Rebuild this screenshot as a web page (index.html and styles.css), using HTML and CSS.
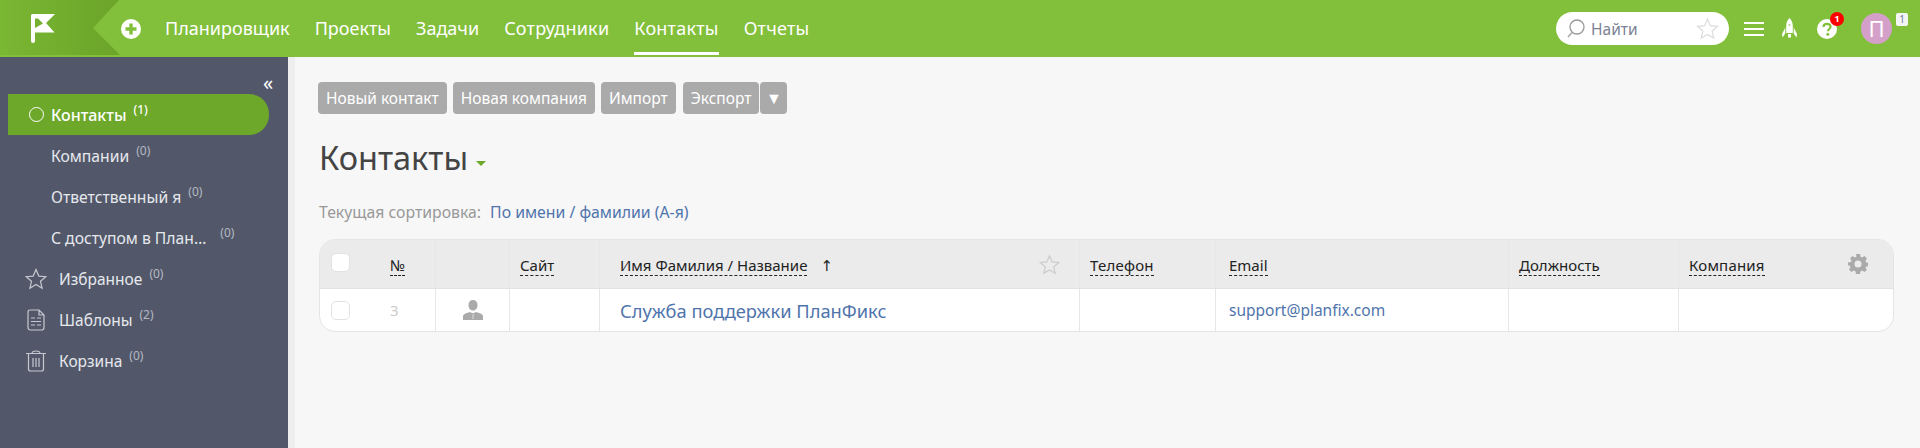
FILE: index.html
```html
<!DOCTYPE html>
<html lang="ru">
<head>
<meta charset="utf-8">
<title>Контакты</title>
<link rel="stylesheet" href="styles.css">
</head>
<body>
<header class="topbar">
  <a class="logo">
    <svg class="logo-bg" width="120" height="57" viewBox="0 0 120 57"><defs><linearGradient id="lg" x1="0" y1="0" x2="1" y2="0"><stop offset="0" stop-color="#7ab733"/><stop offset="1" stop-color="#6ba429"/></linearGradient></defs><path d="M0 0H119L93 28L120 55H0Z" fill="url(#lg)"/></svg>
    <svg class="logo-flag" width="24" height="29" viewBox="0 0 24 29"><path d="M0 1.500Q0 0 1.500 0H24L15 9L23.500 18.500H4V27Q4 29 2 29Q0 29 0 27Z M4 4.500V14L12 9.500L7 4.500Z" fill="#fff" fill-rule="evenodd"/></svg>
  </a>
  <svg class="plus" width="20" height="20" viewBox="0 0 20 20"><path fill-rule="evenodd" fill="#fff" d="M10 0a10 10 0 1 0 0 20a10 10 0 0 0 0-20Z M8.300 4.500h3.400v3.800h3.800v3.400h-3.800v3.800h-3.400v-3.800h-3.800v-3.400h3.800Z"/></svg>
  <nav class="nav">
    <a class="nav-item">Планировщик</a>
    <a class="nav-item">Проекты</a>
    <a class="nav-item">Задачи</a>
    <a class="nav-item nav-wide">Сотрудники</a>
    <a class="nav-item nav-wide is-active">Контакты</a>
    <a class="nav-item nav-wide">Отчеты</a>
  </nav>
  <div class="tools">
    <div class="search">
      <svg width="18" height="20" viewBox="0 0 18 20"><circle cx="10" cy="8" r="7" fill="none" stroke="#999" stroke-width="1.300"/><path d="M5 13.500L1 18" stroke="#aaa" stroke-width="1.600" fill="none"/></svg>
      <span class="search-text">Найти</span>
      <svg class="search-star" width="23" height="23" viewBox="0 0 24 24"><path d="M12 2l3 7 7.500.7-5.700 5 1.700 7.300L12 18.200 5.500 22l1.700-7.300-5.700-5L9 9z" fill="none" stroke="#ddd" stroke-width="1.300"/></svg>
    </div>
    <svg class="burger" width="20" height="14" viewBox="0 0 20 14"><path d="M0 1H20M0 7H20M0 13H20" stroke="#fff" stroke-width="2"/></svg>
    <svg class="rocket" width="15" height="20" viewBox="0 0 15 20"><path fill="#fff" d="M7.500 0C9.800 2 10.800 5 10.800 8V15H4.200V8C4.200 5 5.200 2 7.500 0Z M3.300 9.500V15.500L.5 19.500L0 16Z M11.700 9.500V15.500L14.500 19.500L15 16Z M6 16H9V19.500H6Z"/><circle cx="7.500" cy="7" r="1" fill="#a8d47a"/></svg>
    <span class="help">
      <svg width="20" height="20" viewBox="0 0 20 20"><circle cx="10" cy="10" r="10" fill="#fff"/><path d="M6.500 8C6.500 5.800 8 4.800 10 4.800S13.500 6 13.500 7.800C13.500 10 11 10 11 12.300" fill="none" stroke="#82c03c" stroke-width="2.200"/><circle cx="10.800" cy="15.300" r="1.500" fill="#82c03c"/></svg>
      <b class="help-badge">1</b>
    </span>
    <span class="avatar">П<b class="avatar-badge">1</b></span>
  </div>
</header>
<div class="layout">
  <aside class="sidebar">
    <div class="collapse">«</div>
    <a class="side-item is-current"><span class="ring"></span><span class="side-label">Контакты</span><sup class="count">(1)</sup></a>
    <a class="side-item is-sub"><span class="side-label">Компании</span><sup class="count">(0)</sup></a>
    <a class="side-item is-sub"><span class="side-label">Ответственный я</span><sup class="count">(0)</sup></a>
    <a class="side-item is-sub"><span class="side-label">С доступом в План…</span><sup class="count wide">(0)</sup></a>
    <a class="side-item has-icon">
      <svg width="22" height="22" viewBox="0 0 22 22"><path d="M11 1.500l2.800 6.600 7 .6-5.300 4.600 1.600 7L11 16.500l-6.100 3.800 1.600-7L1.200 8.700l7-.6z" fill="none" stroke="#c5c8d0" stroke-width="1.200"/></svg>
      <span class="side-label">Избранное</span><sup class="count">(0)</sup></a>
    <a class="side-item has-icon">
      <svg width="22" height="22" viewBox="0 0 22 22"><path d="M5 1H14L19 6V18.500Q19 21 16.500 21H5.500Q3 21 3 18.500V3Q3 1 5 1Z M14 1V6H19 M6 9H10M12 9H16M6 12.500H16M6 16H10M12 16H16" fill="none" stroke="#c5c8d0" stroke-width="1.200"/></svg>
      <span class="side-label">Шаблоны</span><sup class="count">(2)</sup></a>
    <a class="side-item has-icon">
      <svg width="22" height="22" viewBox="0 0 22 22"><path d="M1 3.500H21M7 3.500C7 1.500 9 1 11 1S15 1.500 15 3.500M3.500 3.500V19Q3.500 21 5.500 21H16.500Q18.500 21 18.500 19V3.500M8 8V17M11 8V17M14 8V17" fill="none" stroke="#c5c8d0" stroke-width="1.200"/></svg>
      <span class="side-label">Корзина</span><sup class="count">(0)</sup></a>
  </aside>
  <div class="strip"></div>
  <main class="main">
    <div class="actions">
      <button class="btn">Новый контакт</button>
      <button class="btn">Новая компания</button>
      <button class="btn">Импорт</button>
      <div class="btn-group">
        <button class="btn">Экспорт</button>
        <button class="btn btn-arrow">▼</button>
      </div>
    </div>
    <h1 class="title">Контакты<span class="caret"></span></h1>
    <p class="sort">Текущая сортировка:<a class="link">По имени / фамилии (А-я)</a></p>
    <div class="grid">
      <div class="row head">
        <div class="cell c-check"><span class="check"></span></div>
        <div class="cell c-num"><span class="dash">№</span></div>
        <div class="cell c-ava"></div>
        <div class="cell c-site"><span class="dash">Сайт</span></div>
        <div class="cell c-name"><span class="dash">Имя Фамилия / Название</span><span class="arrow">↑</span>
          <svg class="name-star" width="21" height="21" viewBox="0 0 24 24"><path d="M12 2l3 7 7.500.7-5.700 5 1.700 7.300L12 18.200 5.500 22l1.700-7.300-5.700-5L9 9z" fill="none" stroke="#ccc" stroke-width="1.400"/></svg></div>
        <div class="cell c-phone"><span class="dash">Телефон</span></div>
        <div class="cell c-mail"><span class="dash">Email</span></div>
        <div class="cell c-pos"><span class="dash">Должность</span></div>
        <div class="cell c-comp"><span class="dash">Компания</span>
          <svg class="gear" width="20" height="20" viewBox="0 0 20 20"><path fill-rule="evenodd" fill="#aaa" d="M8 0h4l.5 2.800 1.700.7L16.500 2 19 4.500l-1.500 2.300.7 1.700 2.800.5v3l-2.800.5-.7 1.700L19 15.500 16.500 18l-2.300-1.500-1.700.7L12 20H8l-.5-2.800-1.700-.7L3.500 18 1 15.500l1.500-2.300-.7-1.700L0 11.500v-3l2.800-.5.700-1.700L2 4.500 4.500 2l2.300 1.500 1.700-.7Z M10 6.500a3.500 3.500 0 1 0 0 7a3.500 3.500 0 0 0 0-7Z"/></svg></div>
      </div>
      <div class="row body">
        <div class="cell c-check"><span class="check"></span></div>
        <div class="cell c-num"><span class="num">3</span></div>
        <div class="cell c-ava">
          <svg width="20" height="20" viewBox="0 0 20 20"><path fill="#aaa" d="M10 0C13 0 14.500 2 14.500 5S13 10.500 10 10.500 5.500 8 5.500 5 7 0 10 0Z M0 20V16.500C0 14 3 13 7 12L9 13H11L13 12C17 13 20 14 20 16.500V20Z"/><path d="M10 14V19" stroke="#ddd"/></svg></div>
        <div class="cell c-site"></div>
        <div class="cell c-name"><a class="link name-link">Служба поддержки ПланФикс</a></div>
        <div class="cell c-phone"></div>
        <div class="cell c-mail"><a class="link">support@planfix.com</a></div>
        <div class="cell c-pos"></div>
        <div class="cell c-comp"></div>
      </div>
    </div>
  </main>
</div>
</body>
</html>
```

FILE: styles.css
```css
* { box-sizing: border-box; }
html, body { margin: 0; height: 100%; }
body { height: 448px; overflow: hidden; display: flex; flex-direction: column; font-family: "Noto Sans", "Open Sans", sans-serif; background: #f7f7f7; color: #444; }
a { cursor: pointer; }

.topbar { height: 57px; flex: none; background: #82c03c; display: flex; align-items: center; position: relative; }
.logo { width: 121px; height: 57px; flex: none; position: relative; display: flex; align-items: flex-start; padding: 14px 0 0 31px; }
.logo-bg { position: absolute; left: 0; top: 0; }
.logo-flag { position: relative; }
.plus { flex: none; }
.nav { display: flex; gap: 25px; margin-left: 24px; align-self: stretch; }
.nav-item { color: #fff; font-size: 18px; line-height: 57px; height: 57px; position: relative; white-space: nowrap; }
.nav-wide { letter-spacing: .22px; }
.nav-item.is-active::after { content: ""; position: absolute; left: 0; right: 0; bottom: 2px; height: 3px; background: #fff; }
.tools { margin-left: auto; display: flex; align-items: center; position: relative; padding-right: 28px; }
.search { width: 173px; height: 33px; border-radius: 17px; background: #fff; display: flex; align-items: center; padding: 0 10px 0 11px; margin-right: 15px; }
.search-text { color: #7a8294; font-size: 15.500px; margin-left: 6px; }
.search-star { margin-left: auto; }
.burger { margin-right: 18px; }
.rocket { margin-right: 20px; margin-top: -1px; }
.help { position: relative; width: 20px; height: 20px; margin-right: 24px; display: block; }
.help svg { display: block; }
.help-badge { position: absolute; left: 13px; top: -7px; width: 14px; height: 14px; border-radius: 50%; background: #f00; color: #fff; font: 700 9px/14px "Noto Sans", sans-serif; text-align: center; }
.avatar { position: relative; width: 31px; height: 31px; border-radius: 50%; background: #d4a0c9; color: #fff; font-size: 22px; line-height: 31px; text-align: center; display: block; }
.avatar-badge { position: absolute; left: 35px; top: 0; width: 12px; height: 13px; border-radius: 2px; background: #f4f4f4; color: #6a7a9a; font: 400 10px/13px "Noto Sans", sans-serif; text-align: center; }

.layout { flex: 1; display: flex; min-height: 0; }
.sidebar { width: 288px; flex: none; background: #525869; padding-top: 37px; position: relative; }
.collapse { position: absolute; left: 263px; top: 16px; color: #fff; font-size: 20px; line-height: 20px; }
.strip { width: 7px; flex: none; background: #eee; }
.side-item { display: flex; align-items: center; height: 41px; color: #e6e8ee; font-size: 15.500px; white-space: nowrap; }
.side-item.is-sub { padding-left: 51px; font-size: 15.700px; }
.side-item.is-current { margin-left: 8px; width: 261px; padding-left: 21px; background: #6da82a; border-radius: 0 20px 20px 0; color: #fff; font-size: 16px; font-weight: 500; }
.ring { width: 15px; height: 15px; border: 1.500px solid #fff; border-radius: 50%; margin-right: 7px; flex: none; }
.side-item.has-icon { padding-left: 25px; }
.side-item.has-icon svg { margin-right: 12px; flex: none; }
.count { font-size: 12px; color: #b5b9c4; margin-left: 7px; position: relative; top: -5px; line-height: 1; vertical-align: baseline; }
.is-current .count { color: #fff; }
.count.wide { margin-left: 14px; }

.main { flex: 1; min-width: 0; padding: 25px 27px 0 23px; }
.actions { display: flex; gap: 6px; }
.btn { height: 32px; border: 0; border-radius: 4px; background: #aaa; color: #fff; font: 400 15.500px "Noto Sans", sans-serif; padding: 0 8px; white-space: nowrap; }
.btn-group { display: flex; gap: 1px; margin-left: 1px; }
.btn-arrow { width: 27px; padding: 0; font-size: 16px; }
.title { margin: 21px 0 0 1px; font-size: 32.500px; font-weight: 400; line-height: 46px; color: #444; display: flex; align-items: center; }
.caret { width: 0; height: 0; border: 5px solid transparent; border-top-color: #6da82a; border-bottom: 0; margin: 10px 0 0 8px; }
.sort { margin: 21px 0 0 1px; font-size: 15.800px; line-height: 20px; color: #999; }
.sort .link { margin-left: 9px; }
.link { color: #4f74ac; }

.grid { margin: 17px 0 0 1px; width: 1575px; border: 1px solid #e4e4e4; border-radius: 16px; overflow: hidden; background: #fff; }
.row { display: grid; grid-template-columns: 40px 76px 74px 90px 480px 136px 293px 170px 1fr; }
.row.head { height: 49px; background: #ebebeb; border-bottom: 1px solid #e2e2e2; font-size: 15px; color: #222; }
.row.body { height: 42px; }
.cell { border-right: 1px solid #e6e6e6; display: flex; align-items: center; padding-left: 10px; position: relative; min-width: 0; white-space: nowrap; }
.head .cell { padding-top: 4px; }
.cell:last-child { border-right: 0; }
.c-check { border-right: 0; padding-left: 11px; }
.head .c-check { align-items: flex-start; padding-top: 13px; }
.c-num { padding-left: 30px; }
.c-ava { justify-content: center; padding-left: 0; }
.c-name { padding-left: 20px; }
.c-phone .dash, .c-comp .dash { letter-spacing: .2px; }
.c-mail { padding-left: 13px; }
.body .c-mail { font-size: 15.500px; }
.check { width: 19px; height: 19px; background: #fff; border: 1px solid #e2e2e2; border-radius: 5px; display: block; }
.dash { border-bottom: 1px dashed #222; line-height: 19px; }
.arrow { margin-left: 13px; font-family: "DejaVu Sans", sans-serif; font-size: 15px; line-height: 19px; }
.num { color: #ccc; font-size: 15px; }
.name-link { font-size: 18.300px; }
.name-star { position: absolute; right: 19px; top: 14px; }
.gear { position: absolute; right: 25px; top: 14px; }
```
